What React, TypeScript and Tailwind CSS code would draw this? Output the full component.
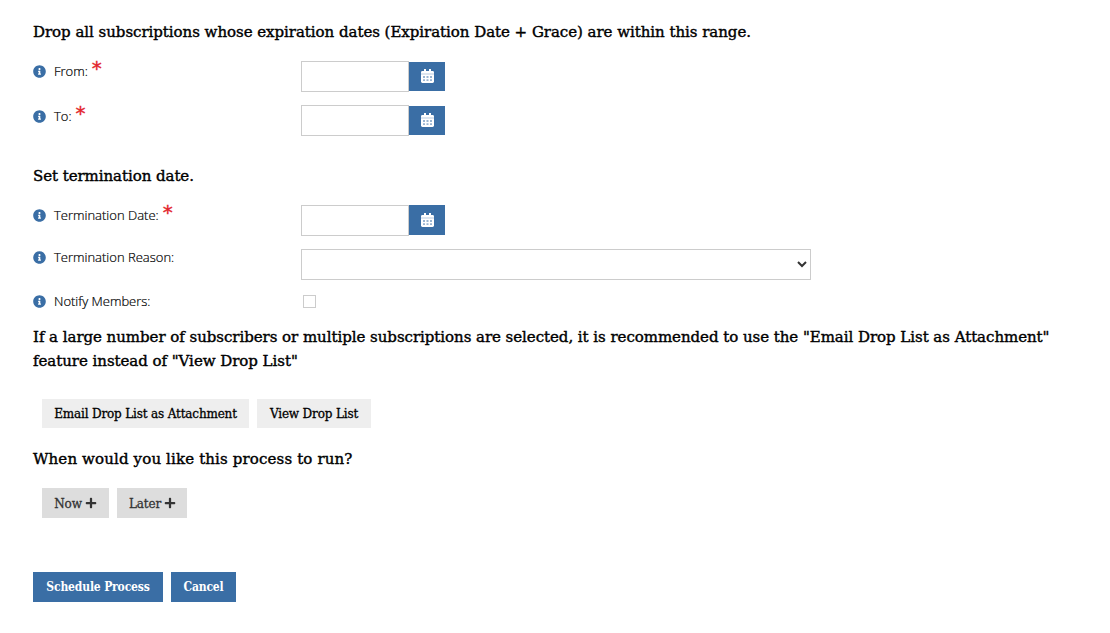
import type { ReactNode } from 'react';
import { FaInfoCircle, FaPlus } from 'react-icons/fa';

interface FieldProps {
  label: string;
  required?: boolean;
  className?: string;
  labelClassName?: string;
  children: ReactNode;
}

function Field({ label, required = false, className = '', labelClassName = '', children }: FieldProps) {
  return (
    <div className={`flex items-start ${className}`}>
      <div className={`w-[268px] shrink-0 flex items-center h-5 ${labelClassName}`}>
        <FaInfoCircle size={13} className="text-[#3a6ea5]" />
        <label className="ml-2 text-[13px] leading-5 font-light text-black [-webkit-text-stroke:0.2px_#000]">
          {label}
        </label>
        {required && (
          <span className="ml-1 h-5 font-['DejaVu_Sans'] text-[20px] leading-[15px] text-[#e3242b] [-webkit-text-stroke:0.4px_#e3242b]">*</span>
        )}
      </div>
      {children}
    </div>
  );
}

function CalendarIcon() {
  return (
    <svg width="13" height="14" viewBox="0 0 13 14" fill="none">
      <path d="M3 0h2v2h3V0h2v2h1.6A1.4 1.4 0 0 1 13 3.4V4H0v-.6A1.4 1.4 0 0 1 1.4 2H3z" fill="#fff" />
      <path d="M0 4h13v2H0z" fill="#dce5ef" />
      <path d="M0 6h13v6.6a1.4 1.4 0 0 1-1.4 1.4H1.4A1.4 1.4 0 0 1 0 12.6z" fill="#fff" />
      <path d="M2 7h2v2H2zM5.5 7h2v2h-2zM9 7h2v2H9zM2 10.2h2V12H2zM5.5 10.2h2V12h-2zM9 10.2h2V12H9z" fill="#9ab5d2" />
    </svg>
  );
}

function DateInput({ tall = false }: { tall?: boolean }) {
  return (
    <div className="flex h-[31px]">
      <input type="text" className="w-[108px] h-[31px] border border-[#ccc] bg-white px-2 text-[13px]" />
      <button
        className={`w-9 bg-[#3a6ea5] text-white flex items-start justify-center pl-px ${tall ? 'h-[30px] pt-2' : 'mt-px h-[29px] pt-[7px]'}`}
      >
        <CalendarIcon />
      </button>
    </div>
  );
}

interface HeadingProps {
  className?: string;
  children: ReactNode;
}

function Heading({ className = 'tracking-[-0.04px]', children }: HeadingProps) {
  return (
    <h4
      className={`font-['DejaVu_Serif',serif] text-[15px] leading-6 [-webkit-text-stroke:0.4px_#000] whitespace-nowrap text-black ${className}`}
    >
      {children}
    </h4>
  );
}

interface ButtonProps {
  className?: string;
  children: ReactNode;
}

function Button({ className = '', children }: ButtonProps) {
  return (
    <button
      className={`flex items-center justify-center whitespace-nowrap font-['DejaVu_Serif',serif] text-[12px] tracking-[-0.16px] ${className}`}
    >
      {children}
    </button>
  );
}

export default function App() {
  return (
    <div className="min-h-[633px] bg-white pl-[33px] pt-5 font-['Open_Sans',sans-serif] text-black">
      <Heading>
        <span>Drop all subscriptions whose expiration dates (Expiration Date + Grace) are within this range.</span>
      </Heading>

      <Field label="From:" required className="mt-[17px] h-[31px]">
        <DateInput />
      </Field>
      <Field label="To:" required className="mt-[13px] h-[31px]" labelClassName="mt-px">
        <DateInput />
      </Field>

      <Heading className="mt-7 tracking-[-0.06px]">
        <span>Set termination date.</span>
      </Heading>

      <Field label="Termination Date:" required className="mt-[17px] h-[31px]">
        <DateInput tall />
      </Field>
      <Field label="Termination Reason:" className="mt-[13px] h-[31px]" labelClassName="-mt-[2px]">
        <select className="w-[510px] h-[31px] border border-[#ccc] bg-white text-[13px] text-[#333]">
          <option></option>
        </select>
      </Field>
      <Field label="Notify Members:" className="mt-[11px] h-5">
        <span className="ml-[2px] mt-1 size-[13px] border border-[#ccc] bg-white" />
      </Field>

      <Heading className="mt-[14px] tracking-[-0.045px]">
        <span>
          If a large number of subscribers or multiple subscriptions are selected, it is recommended to use the "Email Drop List as Attachment"
        </span>
        <br />
        <span>feature instead of "View Drop List"</span>
      </Heading>

      <div className="mt-[26px] ml-[9px] flex gap-2">
        <Button className="h-[29px] w-[207px] bg-[#eee] [-webkit-text-stroke:0.3px_#000]">
          <span>Email Drop List as Attachment</span>
        </Button>
        <Button className="h-[29px] w-[114px] bg-[#eee] [-webkit-text-stroke:0.3px_#000]">
          <span>View Drop List</span>
        </Button>
      </div>

      <Heading className="mt-[19px] tracking-[0.14px]">
        <span>When would you like this process to run?</span>
      </Heading>

      <div className="mt-[17px] ml-[9px] flex gap-2">
        <Button className="h-[30px] w-[67px] gap-[3px] bg-[#ddd] text-[#333] [-webkit-text-stroke:0.3px_#333]">
          <span className="pt-px">Now</span>
          <FaPlus size={12} />
        </Button>
        <Button className="h-[30px] w-[70px] gap-[3px] bg-[#ddd] pl-px text-[#333] [-webkit-text-stroke:0.3px_#333]">
          <span className="pt-px">Later</span>
          <FaPlus size={12} />
        </Button>
      </div>

      <div className="mt-[54px] flex gap-2">
        <Button className="h-[30px] w-[130px] bg-[#3a6ea5] font-bold [font-stretch:condensed] text-white">
          <span>Schedule Process</span>
        </Button>
        <Button className="h-[30px] w-[65px] bg-[#3a6ea5] font-bold [font-stretch:condensed] text-white">
          <span>Cancel</span>
        </Button>
      </div>
    </div>
  );
}
